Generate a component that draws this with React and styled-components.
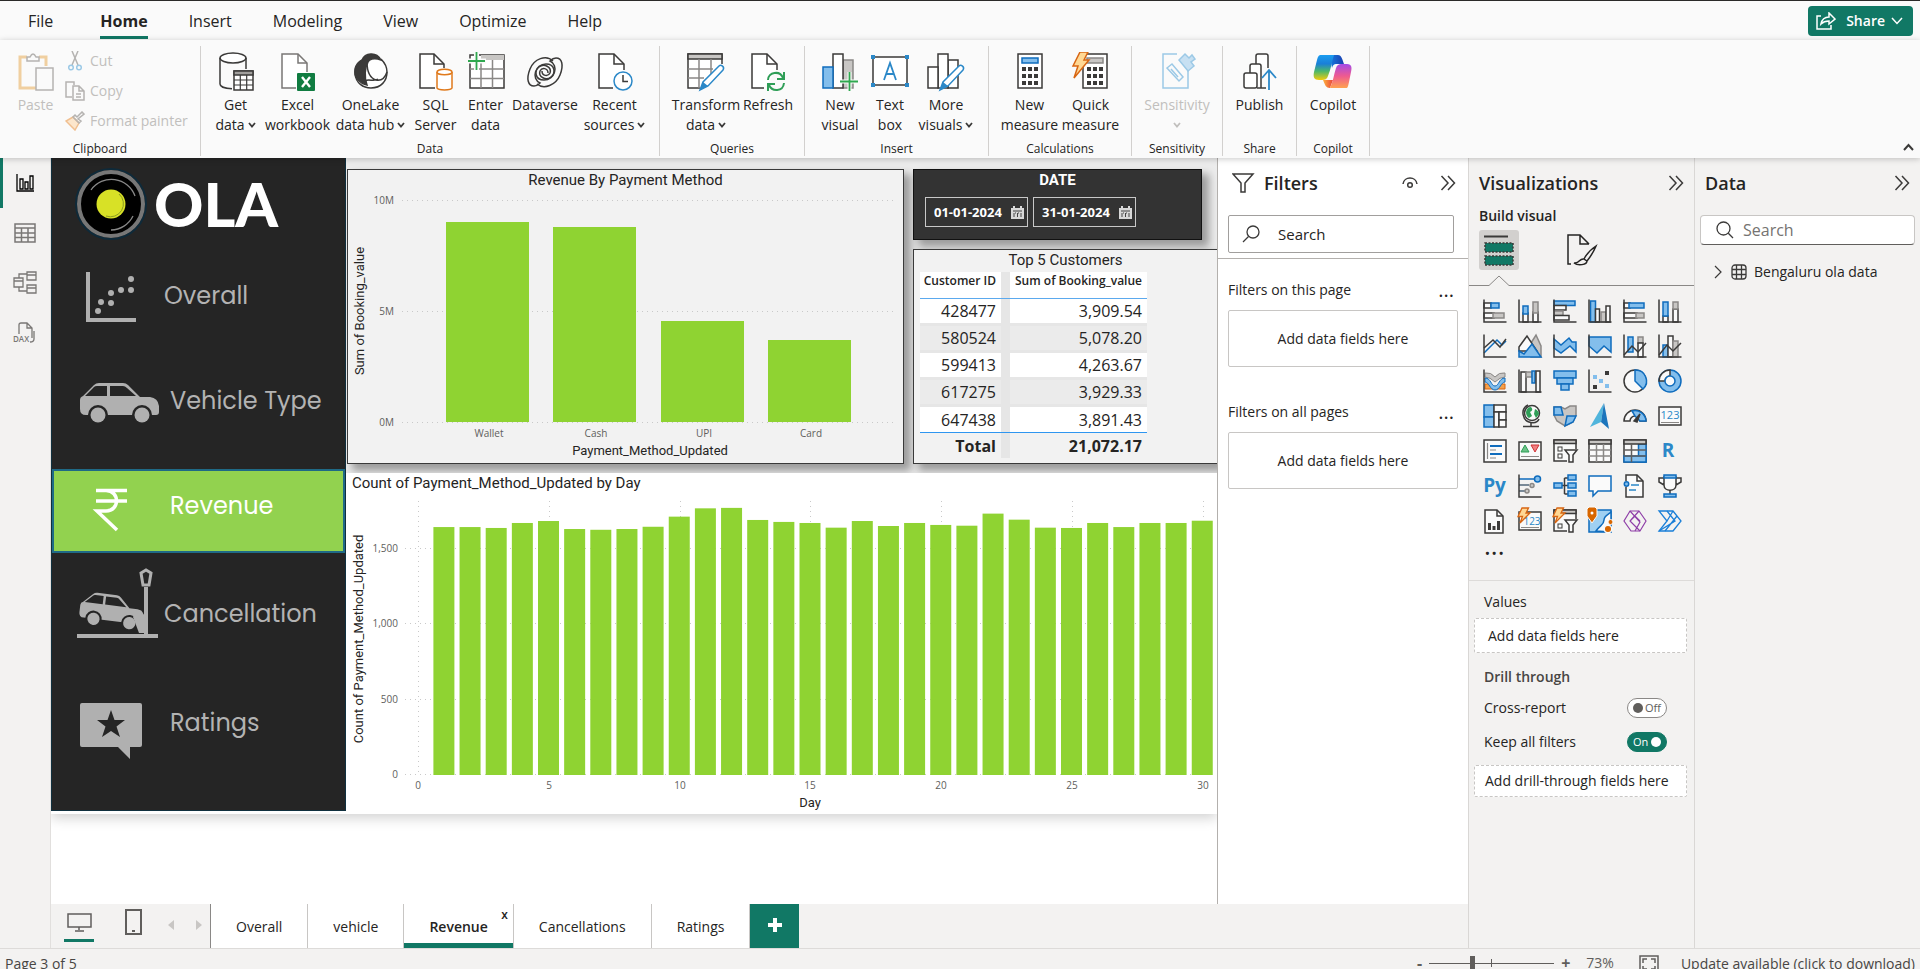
import React, { useState } from 'react';
import styled, { createGlobalStyle } from 'styled-components';

/* ---------- palette ---------- */
const INK = '#252423';
const GREEN = '#117865';
const LIME = '#8fd332';
const D = '#3b3a39';
const B = '#83beec';
const S = '#0f6cbd';
const G = '#c8c6c4';
const W = '#fafafa';

const ui = `'Segoe UI', 'Open Sans', 'Noto Sans', sans-serif`;
const din = `Roboto, 'Liberation Sans', sans-serif`;

const Global = createGlobalStyle`
  * { box-sizing: border-box; }
  body { margin: 0; font-family: ${ui}; color: ${INK}; font-size: 14px; line-height: 20px; background: #f3f2f1; }
  button { font: inherit; color: inherit; background: none; border: 0; padding: 0; cursor: pointer; }
  input { font: inherit; color: inherit; }
  h1, h2, h3, p { margin: 0; font: inherit; }
  svg { display: block; flex: none; }
`;

const Shell = styled.div`
  display: flex;
  flex-direction: column;
  height: 100vh;
  overflow: hidden;
  border-top: 1px solid #2b2a29;
`;

/* ---------- header ---------- */
const MenuBar = styled.header`
  display: flex;
  align-items: flex-start;
  justify-content: space-between;
  height: 39px;
  padding: 5px 7px 0 28px;
  background: ${W};
`;
const MenuTabs = styled.nav`
  display: flex;
  gap: 41px;
`;
const MenuTab = styled.button`
  height: 33px;
  padding: 0 0 1px;
  margin-right: ${(p) => (p.$wide ? '6px' : '0')};
  font-size: 16px;
  font-weight: ${(p) => (p.$active ? 700 : 400)};
  border-bottom: 3px solid ${(p) => (p.$active ? GREEN : 'transparent')};
`;
const ShareButton = styled.button`
  display: flex;
  align-items: center;
  gap: 10px;
  height: 30px;
  padding: 0 10px 0 8px;
  border-radius: 4px;
  background: ${GREEN};
  color: #fff;
  font-weight: 600;
  > svg:last-child { margin-left: -4px; }
`;

const Ribbon = styled.section`
  position: relative;
  z-index: 2;
  display: flex;
  height: 118px;
  padding: 6px 0 2px;
  background: ${W};
  box-shadow: 0 1px 6px rgba(0, 0, 0, 0.22);
`;
const Group = styled.div`
  display: flex;
  flex-direction: column;
  justify-content: space-between;
  width: ${(p) => p.$w}px;
  padding-left: ${(p) => p.$pad || 0}px;
  border-right: 1px solid #d2d0ce;
`;
const GroupItems = styled.div`
  display: flex;
`;
const GroupName = styled.div`
  font-size: 12px;
  line-height: 14px;
  text-align: center;
  margin-left: -${(p) => p.$pad || 0}px;
`;
const Tool = styled.button`
  display: flex;
  flex-direction: column;
  align-items: center;
  width: ${(p) => p.$w}px;
  padding-top: 6px;
  color: ${(p) => (p.disabled ? '#c1bfbd' : INK)};
  font-size: 14px;
  > svg { margin-bottom: 3px; }
  > span { display: flex; align-items: center; gap: 3px; white-space: nowrap; height: 20px; }
`;
const Clipboard = styled.div`
  display: flex;
  padding-left: 6px;
`;
const SmallTools = styled.div`
  display: flex;
  flex-direction: column;
  gap: 10px;
  padding-top: 5px;
`;
const SmallTool = styled.button`
  display: flex;
  align-items: center;
  gap: 5px;
  color: #c1bfbd;
`;
const Collapse = styled.button`
  align-self: flex-end;
  margin: 0 6px 5px auto;
`;

/* ---------- frame ---------- */
const Main = styled.main`
  display: flex;
  flex: 1;
  min-height: 0;
`;
const Rail = styled.nav`
  display: flex;
  flex-direction: column;
  width: 51px;
  flex: none;
  border-right: 1px solid #e1dfdd;
`;
const RailButton = styled.button`
  display: flex;
  align-items: center;
  justify-content: center;
  height: 50px;
  padding-right: 4px;
  border-left: 3px solid ${(p) => (p.$active ? GREEN : 'transparent')};
`;
const Center = styled.div`
  display: flex;
  flex-direction: column;
  flex: 1;
  min-width: 0;
`;
const Work = styled.div`
  display: flex;
  flex: 1;
  min-height: 0;
`;
const Canvas = styled.section`
  flex: 1;
  min-width: 0;
  overflow: hidden;
  background: #fff;
`;
const Page = styled.article`
  display: flex;
  height: 656px;
  background: #fff;
  box-shadow: 0 4px 12px rgba(0, 0, 0, 0.18);
`;

/* ---------- report navigation ---------- */
const SideNav = styled.nav`
  width: 295px;
  height: 653px;
  flex: none;
  background: #252525;
  border: 1px solid #10303f;
  border-top: 0;
`;
const Brand = styled.div`
  display: flex;
  align-items: center;
  gap: 7px;
  height: 101px;
  padding: 0 0 10px 23px;
  color: #fff;
  font-family: Lato, sans-serif;
  font-size: 61px;
  font-weight: 900;
  line-height: 84px;
`;
const SideLink = styled.a`
  display: flex;
  height: 84px;
  margin-top: ${(p) => p.$top}px;
  padding-left: 25px;
  text-decoration: none;
  font-family: Poppins, Inter, sans-serif;
  font-size: 24px;
  font-weight: 400;
  line-height: 74px;
  color: ${(p) => (p.$active ? '#fff' : '#b3b3b3')};
  background: ${(p) => (p.$active ? '#92d24f' : 'transparent')};
  box-shadow: ${(p) => (p.$active ? 'inset 0 0 0 2px #1f6a86' : 'none')};
  > svg { overflow: visible; margin-right: ${(p) => p.$gap}px; }
`;

/* ---------- report visuals ---------- */
const Report = styled.div`
  display: flex;
  flex-direction: column;
  flex: 1;
  min-width: 0;
`;
const TopRow = styled.div`
  display: flex;
  gap: 9px;
  height: 315px;
  padding: 11px 0 9px 1px;
  background: #ececec;
`;
const Card = styled.section`
  background: #f2f2f2;
  border: 1px solid #3a3a3a;
  box-shadow: 6px 6px 8px 1px rgba(0, 0, 0, 0.34);
`;
const ChartCard = styled(Card)`
  flex: 1;
  min-width: 0;
`;
const RightColumn = styled.div`
  display: flex;
  flex-direction: column;
  gap: 9px;
  width: 304px;
  flex: none;
`;
const VisualTitle = styled.h2`
  font-family: ${din};
  font-size: 15px;
  line-height: 20px;
  text-align: ${(p) => p.$align || 'center'};
  font-weight: ${(p) => p.$weight || 400};
`;
const DateCard = styled(Card)`
  width: 289px;
  height: 71px;
  background: #333;
  border-color: #111;
  color: #fff;
`;
const DateRow = styled.div`
  display: flex;
  gap: 5px;
  padding: 7px 0 0 11px;
`;
const DateField = styled.label`
  display: flex;
  align-items: center;
  justify-content: space-between;
  width: 103px;
  height: 30px;
  padding: 0 3px 0 8px;
  border: 1px solid #c8c8c8;
  input { width: 76px; padding: 0; border: 0; background: none; font-size: 13px; font-weight: 700; outline: 0; }
`;
const TableCard = styled(Card)`
  flex: 1;
  border-right: 0;
`;
const DataTable = styled.table`
  margin: 2px 0 0 6px;
  width: 227px;
  table-layout: fixed;
  border-collapse: separate;
  border-spacing: 0;
  font-size: 16px;
  line-height: 24px;
  text-align: right;
  th, td { padding: 0 5px 0 0; height: 27px; border-bottom: 3px solid #e6e6e6; }
  th:first-child, td:first-child { width: 90px; padding-right: 14px; box-shadow: inset -9px 0 #e6e6e6; }
  thead th { height: 27px; padding-bottom: 8px; line-height: 18px; font-size: 12px; font-weight: 600; white-space: nowrap; border-bottom: 1px solid #5ba9ee; background: #fff; }
  tbody tr { background: #fff; }
  tbody tr:nth-child(even) { background: #ebebeb; }
  tbody tr:last-child td { height: 26px; border-bottom: 1px solid #2f96f0; }
  tfoot td, tfoot th { height: 25px; font-weight: 700; border: 0; }
`;
const DayCard = styled.section`
  flex: 1;
  background: #fff;
  ${VisualTitle} { padding-left: 6px; }
`;
const Chart = styled.svg`
  width: 100%;
  height: auto;
  text { font-family: ${ui}; font-size: 10px; fill: #605e5c; }
  text.title { font-family: ${din}; font-size: 13px; fill: ${INK}; }
  line { stroke: #c9c9c9; stroke-width: 1; stroke-dasharray: 1 4; }
  rect { fill: ${LIME}; }
`;

/* ---------- panes ---------- */
const FiltersPane = styled.aside`
  width: 251px;
  flex: none;
  background: #fff;
  border-left: 1px solid #b3b0ad;
`;
const FilterBlock = styled.div`
  padding: ${(p) => p.$top}px 10px 0;
`;
const FilterHead = styled.div`
  display: flex;
  justify-content: space-between;
  padding-right: 4px;
  margin-bottom: 10px;
`;
const PaneHead = styled.div`
  display: flex;
  align-items: center;
  height: 50px;
  padding: ${(p) => p.$pad};
  > button:last-child { margin-left: ${(p) => (p.$eye ? '22px' : 'auto')}; }
`;
const PaneTitle = styled.h2`
  font-size: 18px;
  font-weight: 600;
  line-height: 24px;
  margin-right: auto;
`;
const FilterSearchWrap = styled.div`
  padding: 7px 14px 5px 10px;
  border-bottom: 1px solid #b3b0ad;
`;
const SearchBox = styled.label`
  display: flex;
  align-items: center;
  gap: ${(p) => (p.$soft ? '9px' : '18px')};
  height: ${(p) => (p.$soft ? '30px' : '38px')};
  padding-left: ${(p) => (p.$soft ? '15px' : '13px')};
  background: #fff;
  border: 1px solid ${(p) => (p.$soft ? '#c8c6c4' : '#a19f9d')};
  border-bottom-color: ${(p) => (p.$soft ? '#605e5c' : '#a19f9d')};
  border-radius: ${(p) => (p.$soft ? '4px' : '2px')};
  input { flex: 1; min-width: 0; padding: 0; border: 0; outline: 0; background: none; font-size: ${(p) => (p.$soft ? 16 : 15)}px; }
  input::placeholder { color: ${(p) => (p.$soft ? '#757371' : INK)}; opacity: 1; }
`;
const DropBox = styled.div`
  display: flex;
  align-items: center;
  justify-content: center;
  height: 57px;
  border: 1px solid #c8c6c4;
  border-radius: 2px;
`;
const Dots = styled.button`
  height: 20px;
  line-height: 18px;
  font-size: ${(p) => (p.$big ? '26px' : '20px')};
`;
const SidePane = styled.aside`
  width: 226px;
  flex: none;
  border-left: 1px solid #d9d7d5;
`;
const Modes = styled.div`
  display: flex;
  gap: 43px;
  padding: 4px 0 0 10px;
`;
const ModeButton = styled.button`
  display: flex;
  align-items: center;
  justify-content: center;
  width: 40px;
  height: 40px;
  border-radius: 3px;
  background: ${(p) => (p.$active ? '#d2d0ce' : 'transparent')};
`;
const BuildLabel = styled.h3`
  font-size: 14px;
  font-weight: 600;
  line-height: 20px;
  padding: 0 10px;
  margin-top: -2px;
`;
const Notch = styled.svg`
  width: 100%;
  height: 12px;
  margin-top: 5px;
`;
const VisualGrid = styled.div`
  display: grid;
  grid-template-columns: repeat(6, 24px);
  grid-auto-rows: 24px;
  gap: 11px;
  padding: 12px 0 0 14px;
`;
const VisualButton = styled.button`
  width: 24px;
  height: 24px;
  svg { overflow: visible; }
`;
const MoreRow = styled.div`
  padding: 2px 0 20px 15px;
  border-bottom: 1px solid #dddbd9;
`;
const Wells = styled.div`
  display: flex;
  flex-direction: column;
  padding: 11px 7px 0 5px;
`;
const WellName = styled.h3`
  padding-left: 10px;
  font-size: 14px;
  font-weight: ${(p) => (p.$strong ? 600 : 400)};
  color: ${(p) => (p.$strong ? '#484644' : INK)};
  margin-bottom: ${(p) => (p.$strong ? 4 : 0)}px;
`;
const Well = styled.div`
  display: flex;
  align-items: center;
  height: ${(p) => p.$h}px;
  margin: ${(p) => p.$m};
  padding-left: ${(p) => p.$pl}px;
  white-space: nowrap;
  background: #fff;
  border: 1px dashed #c8c6c4;
  border-radius: 2px;
`;
const SwitchRow = styled.div`
  display: flex;
  align-items: center;
  justify-content: space-between;
  height: 34px;
  padding: 0 20px 0 10px;
`;
const Switch = styled.span`
  display: flex;
  flex-direction: ${(p) => (p.$on ? 'row-reverse' : 'row')};
  align-items: center;
  justify-content: space-between;
  width: 40px;
  height: 20px;
  padding: 0 5px;
  border-radius: 10px;
  border: 1px solid ${(p) => (p.$on ? GREEN : '#8a8886')};
  background: ${(p) => (p.$on ? GREEN : '#fff')};
  color: ${(p) => (p.$on ? '#fff' : '#605e5c')};
  font-size: 11px;
  input { appearance: none; margin: 0; width: 10px; height: 10px; border-radius: 5px; background: ${(p) => (p.$on ? '#fff' : '#605e5c')}; }
`;
const DataSearch = styled.div`
  padding: 7px 5px 0;
`;
const TreeRow = styled.button`
  display: flex;
  align-items: center;
  padding: 17px 0 0 19px;
  white-space: nowrap;
  svg + svg { margin: 0 7px 0 9px; }
`;

/* ---------- bottom ---------- */
const TabsBar = styled.footer`
  display: flex;
  height: 44px;
`;
const ViewTools = styled.div`
  display: flex;
  width: 160px;
  flex: none;
  padding-left: 13px;
  border-right: 1px solid #8a8886;
`;
const ViewButton = styled.button`
  display: flex;
  flex-direction: column;
  align-items: center;
  justify-content: flex-start;
  width: 30px;
  height: 38px;
  padding-top: ${(p) => p.$top}px;
  margin-right: ${(p) => p.$gap}px;
  border-bottom: 3px solid ${(p) => (p.$active ? GREEN : 'transparent')};
`;
const Arrow = styled.button`
  display: flex;
  align-items: center;
  width: 27px;
  height: 42px;
  padding-left: 13px;
`;
const PageTab = styled.button`
  position: relative;
  padding: 2px 25px 0;
  background: #fff;
  border-right: 1px solid #c8c6c4;
  font-weight: ${(p) => (p.$active ? 600 : 400)};
  box-shadow: ${(p) => (p.$active ? `inset 0 -5px ${GREEN}` : 'none')};
`;
const CloseTab = styled.span`
  position: absolute;
  top: 1px;
  right: 5px;
  font-size: 12px;
`;
const AddTab = styled.button`
  display: flex;
  align-items: center;
  justify-content: center;
  width: 49px;
  padding-bottom: 3px;
  background: ${GREEN};
`;
const Status = styled.footer`
  display: flex;
  align-items: flex-start;
  height: 21px;
  padding: 0 5px;
  overflow: hidden;
  border-top: 1px solid #dddbd9;
  line-height: 30px;
  color: #484644;
`;
const Zoom = styled.div`
  display: flex;
  align-items: center;
  height: 28px;
  margin-left: auto;
  font-size: 16px;
  > button { font-weight: 700; line-height: 28px; color: #605e5c; }
`;
const ZoomSlider = styled.input`
  appearance: none;
  width: 125px;
  height: 16px;
  margin: 0 7px;
  background:
    linear-gradient(#605e5c, #605e5c) 62px 50% / 1px 8px no-repeat,
    linear-gradient(#605e5c, #605e5c) 0 50% / 100% 1px no-repeat;
  &::-webkit-slider-thumb { appearance: none; width: 5px; height: 14px; background: #605e5c; }
`;
const ZoomValue = styled.span`
  margin: 0 25px 0 16px;
  font-size: 14px;
  color: #605e5c;
`;
const UpdateLink = styled.a`
  margin-left: 22px;
  color: inherit;
  text-decoration: none;
`;

/* ---------- icon helpers ---------- */
const Svg = ({ w = 24, h = 24, children, ...rest }) => (
  <svg width={w} height={h} viewBox={`0 0 ${w} ${h}`} fill="none" stroke={D} strokeWidth="1.5" aria-hidden="true" {...rest}>
    {children}
  </svg>
);
const Bx = ({ x, y, w, h, f = W, s = D, sw }) => <rect x={x} y={y} width={w} height={h} fill={f} stroke={s} strokeWidth={sw} />;
const P = ({ d, f = 'none', s, sw }) => <path d={d} fill={f} stroke={s} strokeWidth={sw} />;
const Axes = () => <path d="M1 0.5V23H23.5" stroke={D} fill="none" />;
const Bolt = () => <path d="M4 -1H10.500L8 4H12L2 14L4.500 7.500H0Z" fill="#ffd894" stroke="#d86613" strokeWidth="1.300" />;

const Chevron = ({ color = D }) => (
  <Svg w={8} h={6} stroke={color} strokeWidth="1.800"><path d="M1 1L4 4.500L7 1" /></Svg>
);
const DoubleChevron = () => (
  <Svg w={16} h={16}><path d="M1.500 1L8 8L1.500 15M8 1L14.500 8L8 15" /></Svg>
);
const Lens = ({ flip }) => (
  <Svg w={18} h={18} strokeWidth="1.300">
    {flip ? <><circle cx="11" cy="7" r="6" /><path d="M6.500 11.500L1 17" /></> : <><circle cx="7.500" cy="7.500" r="6.500" /><path d="M12.300 12.300L17 17" /></>}
  </Svg>
);

const tool = {
  getData: (
    <Svg w={36} h={40}>
      <ellipse cx="15" cy="6" rx="13" ry="5" fill="#fff" />
      <path d="M2 6V32C2 34.500 7 36.500 14 36.800M28 6V17" />
      <Bx x={16} y={19} w={19} h={19} f="#fff" /><rect x="16" y="19" width="19" height="4" fill="#a19f9d" />
      <path d="M22.300 23V38M28.700 23V38M16 28H35M16 33H35" strokeWidth="1.200" />
    </Svg>
  ),
  excel: (
    <Svg w={36} h={40}>
      <path d="M16 36H2V2H18L27 11V20" fill="#fff" stroke="#797775" /><path d="M18 2V11H27" stroke="#797775" />
      <rect x="17" y="21" width="18" height="18" rx="1" fill="#107c41" stroke="none" />
      <path d="M22 25L30 35M30 25L22 35" stroke="#fff" strokeWidth="2.400" />
    </Svg>
  ),
  onelake: (
    <Svg w={36} h={40}>
      <path d="M11 7C4 11 2 17 2 22C3 31 10 36 18 36C28 36 34 29 34 20C34 16 32 11 28 7" fill="#fff" />
      <path d="M9 8C12 1 23 -1 28 8C20 5 16 8 15 10C12 15 11 25 14 33C5 31 1 24 2 17C3 13 5 10 9 8Z" fill={D} />
      <path d="M14 10C14 19 17 26 23 28C28 29 32 26 34 20M9 32C15 24 19 31 25 27" />
    </Svg>
  ),
  sql: (
    <Svg w={36} h={40}>
      <path d="M17 36H2V2H16L26 12V16" fill="#fff" /><path d="M16 2V12H26" />
      <path d="M19 20V36C20 38.500 33 38.500 34 36V20" fill="#fff" stroke="#e07a1c" /><ellipse cx="26.500" cy="20" rx="7.500" ry="2.800" fill="#fff" stroke="#e07a1c" />
    </Svg>
  ),
  enter: (
    <Svg w={38} h={40}>
      <Bx x={3} y={3} w={34} h={33} f="#fff" /><rect x="14" y="3" width="23" height="5" fill={G} stroke="none" />
      <path d="M14 8V36M25.500 8V36M3 17H37M3 26.500H37" stroke="#8a8886" />
      <path d="M9.500 0V18M0 9H19" stroke={W} strokeWidth="5" /><path d="M9.500 0V18M1 9H18" stroke="#2fa84f" strokeWidth="1.800" />
    </Svg>
  ),
  dataverse: (
    <Svg w={38} h={40} strokeWidth="1.500">
      <path d="M27 9C20 2 8 7 4 17C0 27 2 34 8 34C11 34 13 32 14 31C5 27 9 12 20 12C29 12 30 21 25 25C20 29 12 25 14 19C16 15 22 16 22 21" />
      <path d="M11 32C18 38 30 33 34 23C38 13 36 6 30 6C27 6 25 8 24 9C33 13 29 28 18 28C9 28 8 19 13 15C18 11 26 15 24 21C22 25 16 24 16 19" />
    </Svg>
  ),
  recent: (
    <Svg w={36} h={40}>
      <path d="M16 36H2V2H17L27 12V18" fill="#fff" /><path d="M17 2V12H27" />
      <circle cx="26" cy="29" r="9" fill="#fff" stroke="#2b88c8" /><path d="M26 23V29.500H31" />
    </Svg>
  ),
  transform: (
    <Svg w={40} h={40}>
      <path d="M14 36H2V2H36V12" fill="#fff" /><rect x="2" y="2" width="34" height="5" fill={G} />
      <path d="M13 7V36M25 7V22M2 17H27M2 26H18" stroke="#8a8886" />
      <path d="M14 38L17 30L33 14C35 12 39 15 37 18L22 34Z" fill="#fff" stroke="#2b88c8" /><path d="M14 38L17 30L22 34Z" fill="#2b88c8" stroke="none" />
    </Svg>
  ),
  refresh: (
    <Svg w={36} h={40}>
      <path d="M14 36H2V2H17L27 12V18" fill="#fff" /><path d="M17 2V12H27" />
      <path d="M18 28C18 20 30 18 33 26M34 20V27H27M34 31C33 40 22 40 19 33M18 39V32H25" stroke="#2f9e57" strokeWidth="2" />
    </Svg>
  ),
  newVisual: (
    <Svg w={38} h={40}>
      <Bx x={22} y={8} w={10} h={28} f={G} s="#8a8886" /><Bx x={12} y={2} w={10} h={34} f="#fff" /><Bx x={2} y={15} w={10} h={21} f={B} s={S} />
      <path d="M28.500 20V40M19 29.500H38" stroke={W} strokeWidth="4" /><path d="M28.500 20V39M19 29.500H37" stroke="#2fa84f" strokeWidth="1.800" />
    </Svg>
  ),
  textBox: (
    <Svg w={40} h={40}>
      <Bx x={3} y={5} w={34} h={28} f="#fff" /><path d="M14 28L20 11L26 28M16 22H24" stroke="#2b88c8" strokeWidth="1.800" />
      {[[1, 3], [35, 3], [1, 31], [35, 31]].map(([x, y]) => <rect key={`${x}-${y}`} x={x} y={y} width="4" height="4" fill="#2b88c8" stroke="none" />)}
    </Svg>
  ),
  moreVisuals: (
    <Svg w={40} h={40}>
      <path d="M22 8H32V36H22Z" fill="#fff" /><Bx x={12} y={2} w={10} h={34} f="#fff" /><Bx x={2} y={15} w={10} h={21} f="#fff" />
      <path d="M14 38L17 30L33 14C35 12 39 15 37 18L22 34Z" fill="#fff" stroke="#2b88c8" /><path d="M14 38L17 30L22 34Z" fill="#2b88c8" stroke="none" />
    </Svg>
  ),
};
const Calc = ({ blue }) => (
  <>
    <Bx x={8} y={2} w={24} h={34} f="#fff" /><Bx x={12} y={6} w={16} h={5} f={blue ? B : G} s={blue ? S : '#8a8886'} />
    {[15, 22, 29].map((y) => [12, 18, 24].map((x) => <rect key={`${x}-${y}`} x={x} y={y} width="4" height="4" fill={D} stroke="none" />))}
  </>
);
tool.calc = <Svg w={40} h={40}><Calc blue /></Svg>;
tool.quick = (
  <Svg w={40} h={40}>
    <g transform="translate(4 0)"><Calc /></g>
    <path d="M9 0H17L13 8H18L3 26L7 14H2Z" fill="#ffd894" stroke="#d86613" />
  </Svg>
);
tool.sensitivity = (
  <Svg w={40} h={40} stroke="#9cc9e6">
    <path d="M20 2H6V36H31V17" /><path d="M10 16L15 12L26 25L22 29Z M14 17L21 25" />
    <path d="M22 8L28 2L32 6L35 3L38 7L34 10L37 14L31 19Z" fill="#c7e0f2" />
  </Svg>
);
tool.publish = (
  <Svg w={36} h={40}>
    <path d="M14 12V4Q14 2 16 2H24Q26 2 26 4V16" fill="#fff" /><path d="M8 21V14Q8 12 10 12H17Q19 12 19 14V36" fill="#fff" />
    <rect x="2" y="21" width="13" height="15" rx="2" fill="#fff" /><path d="M15 36H24" />
    <path d="M27 38V19M20 26L27 18L34 26" stroke="#2b88c8" strokeWidth="1.800" />
  </Svg>
);
tool.copilot = (
  <svg width="40" height="40" viewBox="0 0 40 40" aria-hidden="true">
    <defs>
      <linearGradient id="cpA" x1="0" y1="0" x2="0" y2="1"><stop offset="0" stopColor="#1b9df0" /><stop offset="0.350" stopColor="#1a7fd8" /><stop offset="0.650" stopColor="#4cb86a" /><stop offset="1" stopColor="#f2cc0c" /></linearGradient>
      <linearGradient id="cpB" x1="0" y1="0" x2="0" y2="1"><stop offset="0" stopColor="#a44be8" /><stop offset="0.500" stopColor="#ee5a90" /><stop offset="1" stopColor="#ffa24f" /></linearGradient>
      <linearGradient id="cpC" x1="0" y1="0" x2="1" y2="0"><stop offset="0" stopColor="#1679dd" /><stop offset="1" stopColor="#1b3fb0" /></linearGradient>
      <linearGradient id="cpD" x1="0" y1="0" x2="1" y2="0"><stop offset="0" stopColor="#ffb13d" /><stop offset="1" stopColor="#e8443c" /></linearGradient>
    </defs>
    <path d="M17 3H25C28 3 29 6 31 12H23Q20 12 19 16Z" fill="url(#cpC)" />
    <path d="M10 28H20L17 36C13 36 12 33 10 28Z" fill="url(#cpD)" />
    <path d="M8 3H21C19 9 18 17 15 24C14 27 12 28 9 28H6C1 28 0 25 1 20L4 8C5 4 6 3 8 3Z" fill="url(#cpA)" />
    <path d="M33 36H17C20 30 21 22 23 16C24 13 26 12 28 12H34C39 12 39 16 38 20L36 30C35 34 35 36 33 36Z" fill="url(#cpB)" />
  </svg>
);

/* ---------- visual gallery icons ---------- */
const gallery = {
  'Stacked bar chart': <Svg><Bx x={1} y={4} w={7} h={5} /><Bx x={8} y={4} w={8} h={5} f={B} s={S} /><Bx x={1} y={14} w={10} h={5} /><Bx x={10} y={14} w={11} h={5} f={G} s="#8a8886" /><Axes /></Svg>,
  'Stacked column chart': <Svg><Bx x={5} y={14} w={5} h={9} /><Bx x={5} y={7} w={5} h={8} f={B} s={S} /><Bx x={15} y={13} w={5} h={10} /><Bx x={15} y={3} w={5} h={11} f={G} s="#8a8886" /><Axes /></Svg>,
  'Clustered bar chart': <Svg><Bx x={1} y={2} w={21} h={4.5} f={B} s={S} /><Bx x={1} y={6.500} w={12} h={4.5} /><Bx x={1} y={12} w={9} h={4.5} f={G} s="#8a8886" /><Bx x={1} y={16.500} w={15} h={4.5} /><Axes /></Svg>,
  'Clustered column chart': <Svg><Bx x={2.500} y={2} w={5} h={21} f={B} s={S} /><Bx x={7.500} y={10} w={4} h={13} /><Bx x={13} y={13} w={5} h={10} f={G} s="#8a8886" /><Bx x={18} y={7} w={4} h={16} /><Axes /></Svg>,
  '100% stacked bar chart': <Svg><Bx x={1} y={4} w={6} h={5} /><Bx x={6} y={4} w={15} h={5} f={B} s={S} /><Bx x={1} y={14} w={13} h={5} /><Bx x={13} y={14} w={8} h={5} f={G} s="#8a8886" /><Axes /></Svg>,
  '100% stacked column chart': <Svg><Bx x={5} y={17} w={5} h={6} /><Bx x={5} y={3} w={5} h={14} f={B} s={S} /><Bx x={15} y={10} w={5} h={13} /><Bx x={15} y={3} w={5} h={7} f={G} s="#8a8886" /><Axes /></Svg>,
  'Line chart': <Svg><P d="M1 19L14 6L19 11L23 7" s={S} /><P d="M1 14L10 6L17 13L23 5" /><Axes /></Svg>,
  'Area chart': <Svg><P d="M13 9L18 1L23 12V23H13Z" f={G} s="#8a8886" /><P d="M1 13L9 2L19 17H1Z" f={W} /><P d="M1 17L6 20L14 10L23 23H1Z" f={B} s={S} /></Svg>,
  'Stacked area chart': <Svg><P d="M1 5L8 11L16 4L19 8H23V18L17 12L8 19L1 14Z" f={B} s={S} /><Axes /></Svg>,
  '100% stacked area chart': <Svg><P d="M1 3H23V18L16 12L9 19L1 12Z" f={B} s={S} /><Axes /></Svg>,
  'Line and stacked column chart': <Svg><Bx x={5} y={3} w={5} h={15} f={B} s={S} /><Bx x={15} y={3} w={5} h={6} f={G} s="#8a8886" /><Bx x={15} y={9} w={5} h={14} /><P d="M1 21L9 12L15 18L23 9" /><Axes /></Svg>,
  'Line and clustered column chart': <Svg><Bx x={5} y={11} w={5} h={12} f={B} s={S} /><Bx x={10} y={2} w={5} h={21} /><Bx x={15} y={7} w={5} h={16} f={G} s="#8a8886" /><P d="M1 21L9 11L15 17L23 9" /><Axes /></Svg>,
  'Ribbon chart': <Svg><P d="M2 4Q8 3 12 8Q16 3 22 4V8Q17 8 12 13Q7 8 2 8Z" f={G} s="#8a8886" sw="1" /><P d="M2 15H8L12 19L16 15H22V20H2Z" f="#f5a04a" s="#d86613" sw="1" /><P d="M2 9C8 9 8 17 12 17C16 17 16 9 22 9V13C18 13 17 21 12 21C7 21 6 13 2 13Z" f={B} s={S} sw="1" /><Axes /></Svg>,
  'Waterfall chart': <Svg><Bx x={3} y={3} w={5} h={20} /><Bx x={8} y={3} w={6} h={5} f={G} s="#8a8886" /><Bx x={14} y={2} w={3} h={12} f={B} s={S} /><Bx x={18} y={2} w={4} h={21} /><Axes /></Svg>,
  'Funnel chart': <Svg><Bx x={1} y={2} w={22} h={7} f={B} s={S} /><Bx x={4} y={9} w={16} h={6} f={B} s={S} /><Bx x={8} y={15} w={8} h={6} f={B} s={S} /></Svg>,
  'Scatter chart': <Svg stroke="none"><g stroke={D}><Axes /></g><rect x="5" y="6" width="4" height="4" fill={B} /><rect x="17" y="2" width="4" height="4" fill={D} /><rect x="11" y="10" width="4" height="4" fill={B} /><rect x="17" y="15" width="4" height="4" fill={B} /><rect x="5" y="16" width="4" height="4" fill={D} /></Svg>,
  'Pie chart': <Svg><circle cx="12" cy="12" r="11" fill={W} /><P d="M12 1A11 11 0 0 1 20 20L12 12Z" f={B} s={S} /></Svg>,
  'Donut chart': <Svg><circle cx="12" cy="12" r="11" fill={B} stroke={S} /><P d="M12 1A11 11 0 0 0 1 12H7A5 5 0 0 1 12 7Z" f={W} /><circle cx="12" cy="12" r="5" fill={W} stroke={S} /></Svg>,
  Treemap: <Svg><Bx x={1} y={1} w={10} h={12} f={B} s={S} /><Bx x={1} y={13} w={10} h={10} f={B} s={S} /><Bx x={11} y={1} w={12} h={7} /><Bx x={11} y={8} w={5} h={15} /><Bx x={16} y={8} w={7} h={8} /><Bx x={16} y={16} w={7} h={7} /></Svg>,
  Map: <Svg><circle cx="14" cy="9" r="7.500" fill={W} /><P d="M8 8Q9 3 13 3Q16 6 12 8L14 12L11 14Q8 12 8 8ZM17 5Q21 7 21 10L18 14L16 10Z" f="#2f9e57" s="none" /><P d="M10 1C2 5 4 17 13 18.500C17 19 20 18 21 15" /><P d="M13 19V22M5 22.500H21" /></Svg>,
  'Filled map': <Svg><P d="M1 3H8L12 5L17 2H23V11L20 18L12 22L4 17L1 11Z" f={G} s="#8a8886" /><P d="M1 3H8L10 11H1Z" f={B} s={S} /><P d="M14 12H23L20 18L12 22Z" f={B} s={S} /></Svg>,
  'Azure map': <Svg stroke="none"><P d="M16 -1L2 23L13 18Z" f="#50b5dc" /><P d="M16 -1L21 25L13 18Z" f="#1c75bc" /></Svg>,
  Gauge: <Svg><P d="M1 17A11 11 0 0 1 23 17H17A5 5 0 0 0 7 17Z" f={W} /><P d="M9 7A11 11 0 0 1 23 17H17L12 12Z" f={B} s={S} /><P d="M11 17L17 10L14 18Z" f={D} /></Svg>,
  Card: <Svg><Bx x={1} y={3} w={22} h={18} /><text x="12" y="15" textAnchor="middle" fontSize="11" fill="#2b88c8" stroke="none">123</text><P d="M3 18.500H21" s="#8a8886" sw="1" /></Svg>,
  'Multi-row card': <Svg><Bx x={1} y={1} w={22} h={22} /><P d="M4.500 4V20M7 11H13M7 19H13" s="#8a8886" sw="1.200" /><P d="M7 7H19M7 15H19" s={S} sw="2" /></Svg>,
  KPI: <Svg><Bx x={1} y={3} w={22} h={18} /><P d="M3 13L7 6L11 13Z" f="#6cc287" s="#2f9e57" sw="1" /><P d="M13 6H21L17 13Z" f="#f08080" s="#d13438" sw="1" /><P d="M3 17.500H21" s="#8a8886" sw="1" /></Svg>,
  Slicer: <Svg><P d="M14 22H1V1H23V10" f={W} /><Bx x={1} y={1} w={22} h={3.500} f={G} /><Bx x={5} y={8} w={4} h={4} sw="1" /><Bx x={5} y={15} w={4} h={4} sw="1" /><P d="M12 11H24L20 16V23H16V16Z" f={W} /></Svg>,
  Table: <Svg><Bx x={1} y={1} w={22} h={22} /><Bx x={1} y={1} w={22} h={4} f={G} /><P d="M8.500 5V23M15.500 5V23M1 11H23M1 17H23" s="#8a8886" /></Svg>,
  Matrix: <Svg><Bx x={1} y={1} w={22} h={22} /><rect x="15.500" y="5" width="7.500" height="18" fill={B} stroke={S} /><rect x="1" y="17" width="22" height="6" fill={B} stroke={S} /><Bx x={1} y={1} w={22} h={4} f={G} /><P d="M8.500 5V23M1 11H23M1 17H23" s="#605e5c" /></Svg>,
  'R script visual': <Svg><text x="10" y="18" textAnchor="middle" fontSize="19" fontWeight="700" fill="#2b88c8" stroke="none">R</text></Svg>,
  'Python visual': <Svg><text x="11.500" y="18" textAnchor="middle" fontSize="19" fontWeight="700" fill="#2b88c8" stroke="none">Py</text></Svg>,
  'Key influencers': <Svg><P d="M1 5H17M1 11H11M1 17H8" s={S} /><P d="M1 11H11M1 17H7" s="#8a8886" /><circle cx="19.500" cy="5" r="3" fill={B} stroke={S} /><circle cx="14" cy="11.500" r="2" fill={G} stroke="#8a8886" /><circle cx="9" cy="17" r="2" fill={G} stroke="#8a8886" /><Axes /></Svg>,
  'Decomposition tree': <Svg><P d="M8 11.500H15M11.500 4V20M11.500 4H15M11.500 20H15" /><Bx x={1} y={9} w={8} h={5} f={B} s={S} /><Bx x={15} y={1} w={8} h={5} f={B} s={S} /><Bx x={15} y={9} w={8} h={5} f={B} s={S} /><Bx x={15} y={17} w={8} h={5} f={B} s={S} /></Svg>,
  'Q&A': <Svg><P d="M1 2H23V17H10L5 22V17H1Z" f={W} s={S} /></Svg>,
  Narrative: <Svg><P d="M3 7V1H14L20 7V23H3V13" f={W} /><P d="M14 1V7H20" /><circle cx="3.500" cy="10" r="2.200" fill={B} stroke={S} /><P d="M8 11H16M6 16H13" s="#2b88c8" /></Svg>,
  Metrics: <Svg><P d="M6 3H18V11C18 18 6 18 6 11ZM6 4H1V8L6 11M18 4H23V8L18 11" f={W} /><P d="M12 16V20" /><Bx x={6} y={1} w={12} h={3} f={B} s={S} /><Bx x={6} y={20} w={12} h={3} f={B} s={S} /></Svg>,
  'Paginated report': <Svg><P d="M2 1H14L20 7V24H2Z" f={W} /><P d="M14 1V7H20" /><P d="M5 14H8V21H5ZM9.500 17H12.500V21H9.500ZM14 12H17V21H14Z" f={D} s="none" /></Svg>,
  'Card (new)': <Svg><Bx x={1} y={3} w={22} h={18} /><text x="14" y="16" textAnchor="middle" fontSize="10" fill="#2b88c8" stroke="none">123</text><P d="M3 18.500H21" s="#8a8886" sw="1" /><Bolt /></Svg>,
  'Slicer (new)': <Svg><P d="M14 22H1V1H23V10" f={W} /><Bx x={1} y={1} w={22} h={3.500} f={G} /><Bx x={5} y={15} w={4} h={4} sw="1" /><P d="M12 11H24L20 16V23H16V16Z" f={W} /><Bolt /></Svg>,
  'ArcGIS Maps': <Svg><P d="M1 1H23V23H1Z" f="#9fd0f2" s={S} /><P d="M8 22C12 16 16 16 16 11C16 7 20 6 23 3V23Z" f={W} s={S} /><P d="M4 14L-1 7V0L1 -2H7L9 0V7Z" f="#d86600" s={W} sw="1" /><circle cx="4" cy="4" r="1.500" fill="#fff" stroke="none" /><circle cx="20" cy="20" r="3.800" fill="#d86600" stroke={W} /><circle cx="22.500" cy="13" r="2.500" fill="#d86600" stroke={W} strokeWidth="1" /></Svg>,
  'Power Apps': <Svg stroke="#8f3fa8" strokeWidth="1.200"><P d="M7 2H16L23 12L17 22H8L1 12Z" /><P d="M7 2L17 13L12 22M16 2L7 12L17 22M7 12L12 7L17 12" /></Svg>,
  'Power Automate': <Svg stroke="#1a7fd8" strokeWidth="1.300"><P d="M1 2H15L23 12L15 22H1L9 12Z" /><P d="M9 2L17 12L1 22M9 12L15 2M7 22L19 7" /></Svg>,
};

/* ---------- data ---------- */
const ribbonGroups = [
  { name: 'Data', w: 459, pad: 9, items: [
    ['Get', 'data', 'getData', 51, 1], ['Excel', 'workbook', 'excel', 73], ['OneLake', 'data hub', 'onelake', 73, 1], ['SQL', 'Server', 'sql', 57],
    ['Enter', 'data', 'enter', 43], ['Dataverse', '', 'dataverse', 76], ['Recent', 'sources', 'recent', 63, 1]] },
  { name: 'Queries', w: 145, pad: 10, items: [['Transform', 'data', 'transform', 72, 1], ['Refresh', '', 'refresh', 52]] },
  { name: 'Insert', w: 184, pad: 10, items: [['New', 'visual', 'newVisual', 50], ['Text', 'box', 'textBox', 50], ['More', 'visuals', 'moreVisuals', 62, 1]] },
  { name: 'Calculations', w: 143, pad: 10, items: [['New', 'measure', 'calc', 61], ['Quick', 'measure', 'quick', 61]] },
  { name: 'Sensitivity', w: 91, pad: 0, items: [['Sensitivity', '', 'sensitivity', 90, 1, 1]] },
  { name: 'Share', w: 74, pad: 0, items: [['Publish', '', 'publish', 73]] },
  { name: 'Copilot', w: 73, pad: 0, items: [['Copilot', '', 'copilot', 72]] },
];
const methods = [
  ['Wallet', 9.02], ['Cash', 8.79], ['UPI', 4.55], ['Card', 3.7],
];
const dayCounts = [1642, 1642, 1636, 1669, 1682, 1629, 1624, 1629, 1644, 1711, 1766, 1769, 1689, 1676, 1669, 1638, 1682, 1649, 1669, 1656, 1651, 1731, 1691, 1638, 1636, 1669, 1642, 1669, 1669, 1684];
const customers = [
  ['428477', '3,909.54'], ['580524', '5,078.20'], ['599413', '4,263.67'], ['617275', '3,929.33'], ['647438', '3,891.43'],
];

/* ---------- charts ---------- */
const PaymentChart = () => (
  <Chart viewBox="0 0 555 273" role="img" aria-label="Revenue By Payment Method">
    {[['10M', 10], ['5M', 121], ['0M', 232]].map(([t, y]) => (
      <g key={t}><line x1="54" x2="549" y1={y + 0.5} y2={y + 0.5} /><text x="46" y={y + 4} textAnchor="end">{t}</text></g>
    ))}
    {methods.map(([name, v], i) => {
      const h = Math.round(v * 22.2);
      return (
        <g key={name}>
          <rect x={98 + Math.round(i * 107.4)} y={232 - h} width="83" height={h} />
          <text x={141 + Math.round(i * 107.4)} y="247" textAnchor="middle">{name}</text>
        </g>
      );
    })}
    <text className="title" x="302" y="265" textAnchor="middle">Payment_Method_Updated</text>
    <text className="title" textAnchor="middle" transform="translate(16 121) rotate(-90)">Sum of Booking_value</text>
  </Chart>
);
const DayChart = () => (
  <Chart viewBox="0 0 871 320" role="img" aria-label="Count of Payment_Method_Updated by Day">
    {[['1,500', 56], ['1,000', 131], ['500', 207], ['0', 282]].map(([t, y]) => (
      <g key={t}><line x1="59" x2="868" y1={y - 0.5} y2={y - 0.5} /><text x="52" y={y + 3} textAnchor="end">{t}</text></g>
    ))}
    {[0, 5, 10, 15, 20, 25, 30].map((d) => {
      const x = Math.round(72 + d * 26.15);
      return <g key={d}><line x1={x + 0.5} x2={x + 0.5} y1="8" y2="282" /><text x={x} y="296" textAnchor="middle">{d}</text></g>;
    })}
    {dayCounts.map((c, i) => (
      <rect key={i} x={72 + (i + 1) * 26.15 - 10.75} y={282 - c * 0.151} width="21" height={c * 0.151} />
    ))}
    <text className="title" x="464" y="314" textAnchor="middle">Day</text>
    <text className="title" textAnchor="middle" transform="translate(17 146) rotate(-90)">Count of Payment_Method_Updated</text>
  </Chart>
);

/* ---------- side navigation drawings ---------- */
const Car = () => (
  <>
    <path d="M2 32Q2 29 5 28L16 17Q18 15 21 15H45Q48 15 50 17L62 29H72Q80 30 81 38V44Q81 47 78 47H8Q2 47 2 41Z" fill="#b0b0b0" />
    <path d="M7 28L16 19Q17 18 19 18H29V28ZM32 18H45Q47 18 49 20L58 28H32Z" fill="#252525" />
    <circle cx="20" cy="47" r="10" fill="#252525" /><circle cx="64" cy="47" r="10" fill="#252525" />
    <circle cx="20" cy="47" r="7.500" fill="#b0b0b0" /><circle cx="64" cy="47" r="7.500" fill="#b0b0b0" />
  </>
);
const sideItems = [
  { label: 'Overall', top: 0, gap: 5, art: (
    <g fill="#b0b0b0"><path d="M9 13H13V59H59V63H9Z" />
      {[[54, 20], [54, 31], [44, 31], [34, 34], [34, 44], [24, 43], [21, 52]].map(([x, y]) => <circle key={`${x}-${y}`} cx={x} cy={y} r="3" />)}</g>
  ) },
  { label: 'Vehicle Type', top: 21, gap: 11, art: <g transform="translate(1 4)"><Car /></g> },
  { label: 'Revenue', top: 21, gap: 11, active: true, art: (
    <path d="M19 21.500H50M19 32H50M19 21.500H29C43 21.500 43 42 29 42H20L40 61" stroke="#fff" strokeWidth="3.500" fill="none" />
  ) },
  { label: 'Cancellation', top: 24, gap: 5, art: (
    <>
      <g transform="translate(1 5) rotate(7 30 30) scale(0.820)"><Car /></g>
      <path d="M56 40L59 33L61 38L64 33L66 38L69 34V56H62Z" fill="#b0b0b0" />
      <path d="M0 59H81" stroke="#b0b0b0" strokeWidth="4" /><path d="M69 10V59" stroke="#b0b0b0" strokeWidth="4" />
      <path d="M64 -4L69 -7L74 -4L72 8H66Z" fill="#252525" stroke="#b0b0b0" strokeWidth="3" />
    </>
  ) },
  { label: 'Ratings', top: 25, gap: 11, art: (
    <>
      <path d="M5 17H63Q65 17 65 19V59Q65 61 63 61H53V73L41 61H5Q3 61 3 59V19Q3 17 5 17Z" fill="#b0b0b0" />
      <path d="M34 24L37.500 34H48L39.500 40.500L43 51L34 45L25 51L28.500 40.500L20 34H30.500Z" fill="#252525" />
    </>
  ) },
];

const railIcons = [
  ['Report view', <Svg w={18} h={18} stroke="#000"><path d="M1 0V17H18M4 15V5H7V15ZM9 15V8H12V15ZM14 15V2H17V15Z" strokeWidth="1.300" /></Svg>],
  ['Table view', <Svg w={22} h={20} stroke="#797775"><path d="M1 1H21V19H1ZM1 5H21M1 10H21M1 14.500H21M7.500 5V19M14 5V19" /></Svg>],
  ['Model view', <Svg w={24} h={24} stroke="#797775"><path d="M14 1H23V9H14ZM14 4H23M1 7H10V16H1ZM1 10H10M14 14H23V22H14ZM14 17H23M6 7V3H14M6 16V20H14" strokeWidth="1.300" /></Svg>],
  ['DAX query view', <Svg w={24} h={22} stroke="#797775"><path d="M6 12V3Q6 1 8 1H14L19 6V16M14 1V6H19M21 9V17Q21 20 17 20" strokeWidth="1.300" /><text x="0" y="20" fontSize="8" fontWeight="600" fill="#797775" stroke="none">DAX</text></Svg>],
];
const Calendar = () => (
  <svg width="13" height="13" viewBox="0 0 13 13" aria-hidden="true"><path d="M0 2H2V0H4V2H9V0H11V2H13V13H0Z" fill="#d8d8d8" /><path d="M2 5H11M3 7V11M6.500 7V11M10 7V11M4 7H5M7 7H8" stroke="#444" strokeWidth="1" /></svg>
);

function DateInput({ value, label }) {
  const [v, setV] = useState(value);
  return <DateField><input aria-label={label} value={v} onChange={(e) => setV(e.target.value)} /><Calendar /></DateField>;
}

function SwitchLine({ id, label, initial }) {
  const [on, setOn] = useState(initial);
  return (
    <SwitchRow>
      <label htmlFor={id}>{label}</label>
      <Switch $on={on}><input id={id} type="checkbox" checked={on} onChange={() => setOn(!on)} /><span>{on ? 'On' : 'Off'}</span></Switch>
    </SwitchRow>
  );
}

export default function App() {
  return (
    <>
      <Global />
      <Shell>
        <MenuBar>
          <MenuTabs>
            {['File', 'Home', 'Insert', 'Modeling', 'View', 'Optimize', 'Help'].map((t) => (
              <MenuTab key={t} $active={t === 'Home'} $wide={t === 'File'}>{t}</MenuTab>
            ))}
          </MenuTabs>
          <ShareButton>
            <Svg w={20} h={18} stroke="#fff"><path d="M5 4H1V17H15V13" /><path d="M5 12C6 7 9 5 13 5V1L19 7L13 12V9C9 9 7 10 5 12Z" /></Svg>
            Share
            <Svg w={12} h={8} stroke="#fff"><path d="M1 1L6 6.500L11 1" /></Svg>
          </ShareButton>
        </MenuBar>

        <Ribbon>
          <Group $w={201}>
            <Clipboard>
              <Tool $w={59} disabled>
                <Svg w={36} h={40} stroke="#b5b3b1">
                  <path d="M9 5H2V36H18M21 5H28V14" stroke="#f0cfa0" strokeWidth="3" /><path d="M9 9V5H12Q15 -1 18 5H21V9Z" fill={W} /><Bx x={18} y={16} w={17} h={22} s="#b5b3b1" />
                </Svg>
                <span>Paste</span>
              </Tool>
              <SmallTools>
                <SmallTool disabled><Svg w={20} h={20} stroke="#b5b3b1"><path d="M7 0L13 14M13 0L7 14" /><circle cx="6" cy="16.500" r="2.300" stroke="#9cc9e6" /><circle cx="14" cy="16.500" r="2.300" stroke="#9cc9e6" /></Svg>Cut</SmallTool>
                <SmallTool disabled><Svg w={20} h={20} stroke="#b5b3b1"><path d="M7 16H1V1H9V4M8 5H14L19 10V19H8ZM14 5V10H19M11 13H16M11 16H16" /></Svg>Copy</SmallTool>
                <SmallTool disabled><Svg w={20} h={20} stroke="#b5b3b1"><path d="M8 6L14 12L10 19L1 10Z" fill="#fce6cc" stroke="#f0bf90" /><path d="M8 6L14 12L16 10L13 8L19 3L17 1L12 6L10 4Z" /></Svg>Format painter</SmallTool>
              </SmallTools>
            </Clipboard>
            <GroupName>Clipboard</GroupName>
          </Group>
          {ribbonGroups.map((g) => (
            <Group key={g.name} $w={g.w} $pad={g.pad}>
              <GroupItems>
                {g.items.map(([a, b, icon, w, menu, off]) => (
                  <Tool key={a + b} $w={w} disabled={!!off}>
                    {tool[icon]}
                    <span>{a}</span>
                    <span>{b}{menu ? <Chevron color={off ? '#c1bfbd' : D} /> : null}</span>
                  </Tool>
                ))}
              </GroupItems>
              <GroupName $pad={g.pad}>{g.name}</GroupName>
            </Group>
          ))}
          <Collapse aria-label="Collapse the ribbon"><Svg w={11} h={8} strokeWidth="2"><path d="M1 7L5.500 2L10 7" /></Svg></Collapse>
        </Ribbon>

        <Main>
          <Rail>
            {railIcons.map(([label, icon], i) => <RailButton key={label} aria-label={label} $active={i === 0}>{icon}</RailButton>)}
          </Rail>
          <Center>
            <Work>
              <Canvas>
                <Page>
                  <SideNav>
                    <Brand>
                      <svg width="72" height="72" viewBox="0 0 72 72" aria-hidden="true">
                        <circle cx="36" cy="36" r="35" fill="#000" stroke="#0e2a3a" strokeWidth="2" /><circle cx="36" cy="36" r="32" fill="none" stroke="#777" strokeWidth="4" />
                        <path d="M16 22A25 25 0 0 1 60 28M58 48A25 25 0 0 1 36 62" fill="none" stroke="#888" strokeWidth="1.300" />
                        <circle cx="36" cy="36" r="14.500" fill="#d8e126" /><path d="M44 26A13 13 0 0 1 31 48" fill="none" stroke="#8a9a20" />
                      </svg>
                      OLA
                    </Brand>
                    {sideItems.map((it) => (
                      <SideLink key={it.label} href="#" $top={it.top} $gap={it.gap} $active={it.active}>
                        <svg width="82" height="84" viewBox="0 0 82 84" aria-hidden="true">{it.art}</svg>{it.label}
                      </SideLink>
                    ))}
                  </SideNav>
                  <Report>
                    <TopRow>
                      <ChartCard><VisualTitle>Revenue By Payment Method</VisualTitle><PaymentChart /></ChartCard>
                      <RightColumn>
                        <DateCard>
                          <VisualTitle $weight={700}>DATE</VisualTitle>
                          <DateRow><DateInput label="Start date" value="01-01-2024" /><DateInput label="End date" value="31-01-2024" /></DateRow>
                        </DateCard>
                        <TableCard>
                          <VisualTitle>Top 5 Customers</VisualTitle>
                          <DataTable>
                            <thead><tr><th scope="col">Customer ID</th><th scope="col">Sum of Booking_value</th></tr></thead>
                            <tbody>{customers.map(([id, v]) => <tr key={id}><td>{id}</td><td>{v}</td></tr>)}</tbody>
                            <tfoot><tr><th scope="row">Total</th><td>21,072.17</td></tr></tfoot>
                          </DataTable>
                        </TableCard>
                      </RightColumn>
                    </TopRow>
                    <DayCard><VisualTitle $align="left">Count of Payment_Method_Updated by Day</VisualTitle><DayChart /></DayCard>
                  </Report>
                </Page>
              </Canvas>
              <FiltersPane>
                <PaneHead $pad="0 12px 0 14px" $eye>
                  <Svg w={32} h={20}><path d="M1 1H21L13 10V19H9V10Z" /></Svg>
                  <PaneTitle>Filters</PaneTitle>
                  <button aria-label="Show filter pane"><Svg w={16} h={12}><path d="M1 7C2 -1 14 -1 15 7" /><circle cx="8" cy="8" r="2.300" /></Svg></button>
                  <button aria-label="Collapse filters"><DoubleChevron /></button>
                </PaneHead>
                <FilterSearchWrap><SearchBox><Lens flip /><input placeholder="Search" aria-label="Search filters" /></SearchBox></FilterSearchWrap>
                <FilterBlock $top={21}><FilterHead>Filters on this page<Dots aria-label="More options">...</Dots></FilterHead><DropBox>Add data fields here</DropBox></FilterBlock>
                <FilterBlock $top={35}><FilterHead>Filters on all pages<Dots aria-label="More options">...</Dots></FilterHead><DropBox>Add data fields here</DropBox></FilterBlock>
              </FiltersPane>
            </Work>
            <TabsBar>
              <ViewTools>
                <ViewButton $active $top={8} $gap={25} aria-label="Desktop layout"><Svg w={26} h={20} stroke="#605e5c"><path d="M2 2H25V15H2ZM13 15V18M9 19H18" /></Svg></ViewButton>
                <ViewButton $top={5} $gap={6} aria-label="Mobile layout"><Svg w={18} h={27} stroke="#605e5c"><path d="M1 1H16V25H1ZM7 22H10" strokeWidth="2" /></Svg></ViewButton>
                <Arrow aria-label="Previous page"><svg width="7" height="10"><path d="M6 0V10L0 5Z" fill="#c8c6c4" /></svg></Arrow>
                <Arrow aria-label="Next page"><svg width="7" height="10"><path d="M1 0V10L7 5Z" fill="#c8c6c4" /></svg></Arrow>
              </ViewTools>
              {['Overall', 'vehicle', 'Revenue', 'Cancellations', 'Ratings'].map((t) => (
                <PageTab key={t} $active={t === 'Revenue'}>{t}{t === 'Revenue' && <CloseTab>x</CloseTab>}</PageTab>
              ))}
              <AddTab aria-label="New page"><Svg w={14} h={14} stroke="#fff" strokeWidth="4"><path d="M7 0V14M0 7H14" /></Svg></AddTab>
            </TabsBar>
          </Center>

          <SidePane>
            <PaneHead $pad="0 10px"><PaneTitle>Visualizations</PaneTitle><button aria-label="Collapse visualizations"><DoubleChevron /></button></PaneHead>
            <BuildLabel>Build visual</BuildLabel>
            <Modes>
              <ModeButton $active aria-label="Build visual">
                <Svg w={30} h={32}><path d="M0 2.500H24" strokeWidth="2" /><rect x="1" y="9" width="28" height="9" fill={GREEN} strokeDasharray="2 1.500" /><rect x="1" y="22" width="28" height="9" fill={GREEN} strokeDasharray="2 1.500" /></Svg>
              </ModeButton>
              <ModeButton aria-label="Format visual">
                <Svg w={32} h={32} stroke="#252423"><path d="M5 30H2V1H14L23 10M14 1V10H23" /><path d="M30 12C24 16 20 21 18 25L21 27C25 22 28 17 30 12ZM18 25C13 24 14 30 8 29C12 32 21 31 21 27" /></Svg>
              </ModeButton>
            </Modes>
            <Notch viewBox="0 0 225 12" preserveAspectRatio="none" fill="none" stroke="#8a8886"><path d="M0 10.500H20L30 1L40 10.500H225" /></Notch>
            <VisualGrid>{Object.entries(gallery).map(([name, icon]) => <VisualButton key={name} aria-label={name}>{icon}</VisualButton>)}</VisualGrid>
            <MoreRow><Dots $big aria-label="Get more visuals">...</Dots></MoreRow>
            <Wells>
              <WellName>Values</WellName>
              <Well $h={35} $m="6px 0 14px" $pl={13}>Add data fields here</Well>
              <WellName $strong>Drill through</WellName>
              <SwitchLine id="cross" label="Cross-report" initial={false} />
              <SwitchLine id="keep" label="Keep all filters" initial />
              <Well $h={32} $m="6px 0 0" $pl={10}>Add drill-through fields here</Well>
            </Wells>
          </SidePane>

          <SidePane>
            <PaneHead $pad="0 10px"><PaneTitle>Data</PaneTitle><button aria-label="Collapse data"><DoubleChevron /></button></PaneHead>
            <DataSearch><SearchBox $soft><Lens /><input placeholder="Search" aria-label="Search data" /></SearchBox></DataSearch>
            <TreeRow>
              <Svg w={8} h={14} strokeWidth="1.200"><path d="M1 1L7 7L1 13" /></Svg>
              <Svg w={16} h={16} strokeWidth="1.300"><rect x="1" y="1" width="14" height="14" rx="3" /><path d="M5.500 1V15M10.500 1V15M1 5.500H15M1 10.500H15" /></Svg>
              Bengaluru ola data
            </TreeRow>
          </SidePane>
        </Main>

        <Status>
          <span>Page 3 of 5</span>
          <Zoom>
            <button aria-label="Zoom out">-</button>
            <ZoomSlider type="range" min="0" max="100" defaultValue="34" aria-label="Zoom" />
            <button aria-label="Zoom in">+</button>
            <ZoomValue>73%</ZoomValue>
            <Svg w={20} h={18} stroke="#605e5c"><path d="M1 2H19V18H1ZM4 9V5H8M16 9V5H12M4 12V15H8M16 12V15H12" /></Svg>
          </Zoom>
          <UpdateLink href="#">Update available (click to download)</UpdateLink>
        </Status>
      </Shell>
    </>
  );
}
